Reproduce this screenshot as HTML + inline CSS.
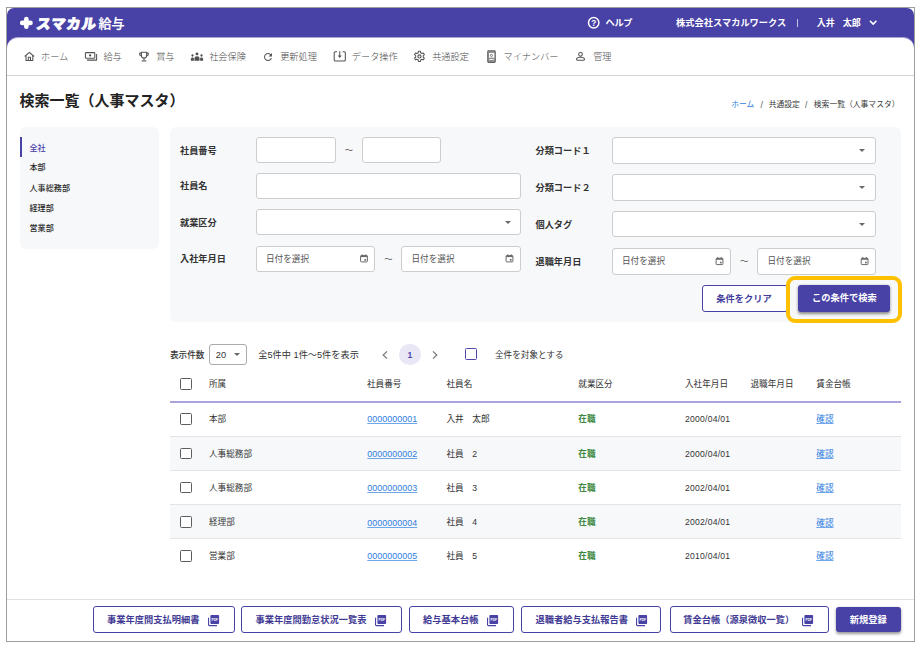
<!DOCTYPE html>
<html lang="ja">
<head>
<meta charset="utf-8">
<title>検索一覧（人事マスタ）</title>
<style>
html,body{margin:0;padding:0;}
body{width:923px;height:649px;position:relative;overflow:hidden;background:#fff;
 font-family:"Liberation Sans","Noto Sans CJK JP",sans-serif;font-size:9.2px;color:#333;}
*{box-sizing:border-box;}
.abs{position:absolute;}
.t{position:absolute;white-space:nowrap;line-height:14px;height:14px;}
.b{font-weight:700;}
#frame{position:absolute;left:6px;top:7px;width:909px;height:635px;border:1px solid #9d9d9d;border-radius:0;pointer-events:none;}
#hdr{position:absolute;left:7px;top:8px;width:907px;height:42px;background:#4841a6;border-radius:7px 7px 0 0;}
#nav{position:absolute;left:7px;top:37px;width:907px;height:39px;background:#fff;border-radius:11px 11px 0 0;border-bottom:1px solid #d4d4d4;border-top:1px solid #a9a5d6;}
.w{color:#fff;}
.nv{color:#4a4a4a;font-weight:300;}
svg{position:absolute;overflow:visible;}
.panel{position:absolute;background:#f7f8fa;border-radius:6px;}
.inp{position:absolute;background:#fff;border:1px solid #cdcdcd;border-radius:3px;}
.ph{color:#555;font-size:8.600px;}
.bc{top:98.100px;font-size:7.800px;color:#3a3a3a;}
.lbl{font-weight:700;color:#333;}
.side{font-size:8.100px;color:#2b2b2b;font-weight:500;}
.caret{position:absolute;width:0;height:0;border-left:3.300px solid transparent;border-right:3.300px solid transparent;border-top:3.800px solid #686868;}
.cb{position:absolute;width:11.800px;height:11.600px;border:1.250px solid #5c5c5c;border-radius:1.500px;background:#fff;}
.row{position:absolute;left:170px;width:731px;}
.td{font-size:8.6px;}
a.lk{color:#2f7ee0;text-decoration:underline;text-decoration-thickness:0.550px;text-underline-offset:0.800px;text-decoration-color:#6ea6ea;position:relative;top:0.400px;}
.num{font-size:8.900px;letter-spacing:0.050px;}
.dt{letter-spacing:0.230px;}
.grn{color:#3d8841;font-weight:700;}
.fb{position:absolute;top:606.200px;height:27.300px;border:1px solid #4841a6;border-radius:3px;background:#fff;}
.fbt{font-weight:700;color:#413a94;font-size:9.250px;}
</style>
</head>
<body>
<div id="hdr"></div>
<div id="nav"></div>

<!-- header -->
<svg style="left:0;top:0" width="140" height="40" viewBox="0 0 140 40"><path d="M26.350 19V26.800M22.200 22.900H30.500" stroke="#fff" stroke-width="4.600" stroke-linecap="round" fill="none"/></svg>
<span class="t w" style="left:34.700px;top:13.500px;font-size:14.300px;letter-spacing:0.950px;font-weight:900;line-height:20px;height:20px;transform:skewX(-8deg);transform-origin:0 100%;-webkit-text-stroke:0.800px #fff">スマカル</span>
<span class="t w" style="left:98.600px;top:13.500px;font-size:13px;font-weight:500;-webkit-text-stroke:0.250px #fff;line-height:20px;height:20px">給与</span>

<svg style="left:0;top:0" width="923" height="40" viewBox="0 0 923 40"><circle cx="593.700" cy="22.750" r="5.200" fill="none" stroke="#fff" stroke-width="1.500"/><text x="593.700" y="25.700" font-size="8.200" font-weight="700" fill="#fff" text-anchor="middle" font-family="Liberation Sans, sans-serif">?</text><path d="M870 20.900L873.200 24.100L876.400 20.900" stroke="#fff" stroke-width="1.500" fill="none"/></svg>
<span class="t w b" style="left:605.500px;top:15.700px;letter-spacing:-0.300px">ヘルプ</span>
<span class="t w b" style="left:676px;top:15.700px;letter-spacing:0.050px">株式会社スマカルワークス</span>
<span class="abs" style="left:797px;top:18.500px;width:1px;height:8.500px;background:#c4c1e6"></span>
<span class="t w b" style="left:816.800px;top:15.700px;font-size:9px">入井<span style="display:inline-block;width:8px"></span>太郎</span>

<!-- nav -->
<svg id="navicons" style="left:0;top:0" width="923" height="649" viewBox="0 0 923 649">
<g fill="none" stroke="#535353" stroke-width="1.050" stroke-linejoin="round">
<path d="M24.700 56.500L29.400 52.300L34.100 56.500"/><path d="M26 55.700V60.500H32.800V55.700"/><path d="M28.300 60.500V57.300H30.500V60.500"/>
<rect x="85.400" y="52.600" width="9.400" height="5.600" rx="0.800"/><path d="M87 60.100H96.600V54"/>
<path d="M141.400 52.300H146.600V55.400A2.600 2.600 0 0 1 141.400 55.400Z"/><path d="M141.400 53.100H139.700V54.100A1.900 1.900 0 0 0 141.600 56"/><path d="M146.600 53.100H148.300V54.100A1.900 1.900 0 0 1 146.400 56"/><path d="M144 58V60.600"/><path d="M141.600 60.900H146.400"/>
<path d="M337 51.800H335.200A1 1 0 0 0 334.200 52.800V60A1 1 0 0 0 335.200 61H344.300A1 1 0 0 0 345.300 60V52.800A1 1 0 0 0 344.300 51.800H342.600"/><path d="M339.750 51.300V56.500"/>
<circle cx="580.500" cy="54.300" r="1.850"/><path d="M580.500 57C578.500 57.300 576.500 58.300 576.500 59.300C576.500 59.900 576.800 60.200 577.300 60.200H583.700C584.200 60.200 584.500 59.900 584.500 59.300C584.500 58.300 582.500 57.300 580.500 57Z"/>
</g>
<g fill="#4f4f4f">
<circle cx="90.100" cy="55.400" r="1.150"/>
<circle cx="197" cy="53.900" r="1.400"/><circle cx="192.500" cy="55.500" r="1.150"/><circle cx="201.500" cy="55.500" r="1.150"/>
<path d="M194.500 60.800V58.600C194.500 57 195.600 56.200 197 56.200C198.400 56.200 199.500 57 199.500 58.600V60.800Z"/>
<path d="M190.900 60.800V59.200C190.900 58 191.600 57.400 192.500 57.400C193.200 57.400 193.700 57.600 193.900 58V60.800Z"/>
<path d="M203.100 60.800V59.200C203.100 58 202.400 57.400 201.500 57.400C200.800 57.400 200.300 57.600 200.100 58V60.800Z"/>
<path d="M337.800 55.600H341.700L339.750 57.900Z"/>
</g>
<path d="M420.64 52.74L420.45 51.25L418.45 51.25L418.26 52.74L416.87 53.54L415.49 52.96L414.49 54.69L415.68 55.60L415.68 57.20L414.49 58.11L415.49 59.84L416.87 59.26L418.26 60.06L418.45 61.55L420.45 61.55L420.64 60.06L422.03 59.26L423.41 59.84L424.41 58.11L423.22 57.20L423.22 55.60L424.41 54.69L423.41 52.96L422.03 53.54Z" fill="none" stroke="#555" stroke-width="1.050" stroke-linejoin="round"/><circle cx="419.45" cy="56.4" r="1.550" fill="none" stroke="#555" stroke-width="1.150"/>
<g>
<rect x="487.750" y="50.800" width="7.500" height="11.600" rx="0.900" fill="#949494" stroke="#636363" stroke-width="1.100"/>
<rect x="489.100" y="53" width="5.200" height="5" fill="#fff"/>
<circle cx="491.450" cy="55.400" r="1.050" fill="none" stroke="#666" stroke-width="0.850"/>
<path d="M489.100 58C490.200 57.300 492.900 57.300 494.300 58V58.400H489.100Z" fill="#8c8c8c"/>
<rect x="489.300" y="59.100" width="4.600" height="0.900" fill="#f4f4f4"/>
</g>
</svg>
<svg style="left:261.5px;top:50.6px" width="12" height="12" viewBox="0 0 24 24"><path fill="#555" d="M17.650 6.350C16.200 4.900 14.210 4 12 4c-4.420 0-7.990 3.580-7.990 8s3.570 8 7.990 8c3.730 0 6.840-2.550 7.730-6h-2.080c-.820 2.330-3.040 4-5.650 4-3.310 0-6-2.690-6-6s2.690-6 6-6c1.660 0 3.140.690 4.220 1.780L13 11h7V4l-2.350 2.350z"/></svg>
<span class="t nv" style="left:41px;top:49.8px">ホーム</span>
<span class="t nv" style="left:103.4px;top:49.8px">給与</span>
<span class="t nv" style="left:156.2px;top:49.8px">賞与</span>
<span class="t nv" style="left:209.2px;top:49.8px">社会保険</span>
<span class="t nv" style="left:280.2px;top:49.8px">更新処理</span>
<span class="t nv" style="left:351.8px;top:49.8px">データ操作</span>
<span class="t nv" style="left:432.2px;top:49.8px">共通設定</span>
<span class="t nv" style="left:503.6px;top:49.8px">マイナンバー</span>
<span class="t nv" style="left:593.2px;top:49.8px">管理</span>

<!-- title / breadcrumb -->
<span class="t b" style="left:19.5px;top:91px;font-size:15px;line-height:20px;height:20px;color:#222">検索一覧（人事マスタ）</span>
<span class="t bc" style="left:731.200px;color:#2f7fdc">ホーム</span>
<span class="t bc" style="left:759.600px;width:4px;text-align:center;font-size:8.500px;color:#555">/</span>
<span class="t bc" style="left:768.700px">共通設定</span>
<span class="t bc" style="left:804.300px;width:4px;text-align:center;font-size:8.500px;color:#555">/</span>
<span class="t bc" style="left:813.800px">検索一覧（人事マスタ）</span>

<!-- sidebar -->
<div class="panel" style="left:20px;top:126.500px;width:138.800px;height:122.300px"></div>
<div class="abs" style="left:20px;top:137.300px;width:2px;height:20px;background:#4841a6"></div>
<span class="t side" style="left:29.500px;top:141.800px;color:#4841a6">全社</span>
<span class="t side" style="left:29.500px;top:161.300px">本部</span>
<span class="t side" style="left:29.500px;top:181.700px">人事総務部</span>
<span class="t side" style="left:29.500px;top:201.700px">経理部</span>
<span class="t side" style="left:29.500px;top:222px">営業部</span>

<!-- search form -->
<div class="panel" style="left:170px;top:126.500px;width:730.600px;height:195.800px"></div>
<span class="t lbl" style="left:180px;top:143.800px">社員番号</span>
<span class="t lbl" style="left:180px;top:179.300px">社員名</span>
<span class="t lbl" style="left:180px;top:216px">就業区分</span>
<span class="t lbl" style="left:180px;top:252px">入社年月日</span>
<span class="t lbl" style="left:535.500px;top:144.0px">分類コード１</span>
<span class="t lbl" style="left:535.500px;top:181.0px">分類コード２</span>
<span class="t lbl" style="left:535.500px;top:217.8px">個人タグ</span>
<span class="t lbl" style="left:535.500px;top:254.5px">退職年月日</span>
<div class="inp" style="left:256px;top:137.4px;width:80px;height:25.4px"></div>
<div class="inp" style="left:361.600px;top:137.400px;width:79.300px;height:25.400px"></div>
<span class="t" style="left:344.800px;top:143.400px;color:#555;font-size:8.400px">～</span>
<div class="inp" style="left:256px;top:173.2px;width:264.5px;height:25.4px"></div>
<div class="inp" style="left:256px;top:209.3px;width:264.5px;height:25.4px"></div>
<div class="caret" style="left:504.700px;top:220.5px"></div>
<div class="inp" style="left:256px;top:245.600px;width:119px;height:26px"></div>
<div class="inp" style="left:401.400px;top:245.600px;width:119.400px;height:26px"></div>
<span class="t ph" style="left:266px;top:251.800px">日付を選択</span>
<span class="t" style="left:384.200px;top:251.600px;color:#555;font-size:8.400px">～</span>
<span class="t ph" style="left:411.500px;top:251.800px">日付を選択</span>
<div class="inp" style="left:612px;top:137.4px;width:264px;height:26.2px"></div>
<div class="caret" style="left:859.300px;top:149.0px"></div>
<div class="inp" style="left:612px;top:174.4px;width:264px;height:26.2px"></div>
<div class="caret" style="left:859.300px;top:186.0px"></div>
<div class="inp" style="left:612px;top:210.9px;width:264px;height:26.2px"></div>
<div class="caret" style="left:859.300px;top:222.5px"></div>
<div class="inp" style="left:612px;top:247.800px;width:119px;height:26.800px"></div>
<div class="inp" style="left:757px;top:247.800px;width:119px;height:26.800px"></div>
<span class="t ph" style="left:622px;top:253.9px">日付を選択</span>
<span class="t" style="left:739.900px;top:254.200px;color:#555;font-size:8.400px">～</span>
<span class="t ph" style="left:767.500px;top:253.9px">日付を選択</span>
<svg style="left:0;top:0" width="923" height="649" viewBox="0 0 923 649"><g transform="translate(360.1 254.3)"><rect x="0.500" y="1.300" width="6.800" height="6.300" rx="0.700" fill="none" stroke="#6a6a6a" stroke-width="1"/><rect x="0.500" y="1.300" width="6.800" height="1.500" fill="#6a6a6a"/><rect x="1.600" y="0" width="1" height="1.600" fill="#6a6a6a"/><rect x="5.200" y="0" width="1" height="1.600" fill="#6a6a6a"/><rect x="4.300" y="4.700" width="1.700" height="1.700" fill="#6a6a6a"/></g><g transform="translate(505.6 254.3)"><rect x="0.500" y="1.300" width="6.800" height="6.300" rx="0.700" fill="none" stroke="#6a6a6a" stroke-width="1"/><rect x="0.500" y="1.300" width="6.800" height="1.500" fill="#6a6a6a"/><rect x="1.600" y="0" width="1" height="1.600" fill="#6a6a6a"/><rect x="5.200" y="0" width="1" height="1.600" fill="#6a6a6a"/><rect x="4.300" y="4.700" width="1.700" height="1.700" fill="#6a6a6a"/></g><g transform="translate(715.6 257)"><rect x="0.500" y="1.300" width="6.800" height="6.300" rx="0.700" fill="none" stroke="#6a6a6a" stroke-width="1"/><rect x="0.500" y="1.300" width="6.800" height="1.500" fill="#6a6a6a"/><rect x="1.600" y="0" width="1" height="1.600" fill="#6a6a6a"/><rect x="5.200" y="0" width="1" height="1.600" fill="#6a6a6a"/><rect x="4.300" y="4.700" width="1.700" height="1.700" fill="#6a6a6a"/></g><g transform="translate(860.7 257)"><rect x="0.500" y="1.300" width="6.800" height="6.300" rx="0.700" fill="none" stroke="#6a6a6a" stroke-width="1"/><rect x="0.500" y="1.300" width="6.800" height="1.500" fill="#6a6a6a"/><rect x="1.600" y="0" width="1" height="1.600" fill="#6a6a6a"/><rect x="5.200" y="0" width="1" height="1.600" fill="#6a6a6a"/><rect x="4.300" y="4.700" width="1.700" height="1.700" fill="#6a6a6a"/></g></svg>
<!-- buttons -->
<div class="abs" style="left:702px;top:285px;width:86px;height:27.300px;border:1px solid #4841a6;border-radius:3px;background:#fff"></div>
<span class="t b" style="left:716.300px;top:291.600px;color:#453e9c;font-size:9.250px">条件をクリア</span>
<div class="abs" style="left:798px;top:285px;width:92px;height:26.800px;border-radius:3px;background:#4841a6;box-shadow:0 1.500px 3px rgba(0,0,0,.45)"></div>
<span class="t b w" style="left:812px;top:291.400px;font-size:9.250px">この条件で検索</span>
<div class="abs" style="left:786px;top:276px;width:116px;height:47px;border:4px solid #ffc000;border-radius:9px"></div>

<!-- list controls -->
<span class="t" style="left:170px;top:347.700px;font-size:8.600px;font-weight:500">表示件数</span>
<div class="inp" style="left:209px;top:344.400px;width:37.600px;height:20.600px;border-color:#ababab"></div>
<span class="t" style="left:215.800px;top:347.900px;font-size:9.200px">20</span>
<div class="caret" style="left:234px;top:353.200px;border-left-width:3px;border-right-width:3px;border-top-width:3.400px"></div>
<span class="t" style="left:258.3px;top:347.5px;font-size:9.2px">全5件中 1件～5件を表示</span>
<svg style="left:382px;top:350.5px" width="6" height="8" viewBox="0 0 6 8"><path d="M5 0.400L1.200 4L5 7.600" stroke="#7c7c7c" stroke-width="1.300" fill="none"/></svg>
<div class="abs" style="left:399.3px;top:344px;width:21.4px;height:21.4px;border-radius:50%;background:#e9e6f5"></div>
<span class="t" style="left:400px;width:20px;text-align:center;top:348.300px;font-size:8.600px;font-weight:700;color:#4f48ad">1</span>
<svg style="left:432.2px;top:350.5px" width="6" height="8" viewBox="0 0 6 8"><path d="M1 0.400L4.800 4L1 7.600" stroke="#7c7c7c" stroke-width="1.300" fill="none"/></svg>
<div class="cb" style="left:465.300px;top:348.200px;width:12.200px;height:12.200px;border-color:#4f48ad;border-width:1.800px"></div>
<span class="t" style="left:495px;top:347.5px;font-size:8.6px">全件を対象とする</span>
<!-- table -->
<div class="cb" style="left:180px;top:378.3px"></div>
<span class="t td" style="left:209px;top:377.2px">所属</span>
<span class="t td" style="left:367px;top:377.2px">社員番号</span>
<span class="t td" style="left:446.5px;top:377.2px">社員名</span>
<span class="t td" style="left:578.3px;top:377.2px">就業区分</span>
<span class="t td" style="left:685px;top:377.2px">入社年月日</span>
<span class="t td" style="left:750.5px;top:377.2px">退職年月日</span>
<span class="t td" style="left:816.3px;top:377.2px">賃金台帳</span>
<div class="abs" style="left:170px;top:401px;width:731px;height:2px;background:#a9a4da"></div>
<div class="row" style="top:403px;height:33.5px;border-bottom:1px solid #e4e4e7;"></div>
<div class="cb" style="left:180px;top:413.1px"></div>
<span class="t td" style="left:209px;top:412.0px">本部</span>
<span class="t td num" style="left:367.300px;top:412.0px"><a class="lk">0000000001</a></span>
<span class="t td" style="left:446.500px;top:412.0px">入井　太郎</span>
<span class="t td grn" style="left:578.300px;top:412.0px">在職</span>
<span class="t td dt" style="left:685px;top:412.0px">2000/04/01</span>
<span class="t td" style="left:816.300px;top:412.0px"><a class="lk">確認</a></span>
<div class="row" style="top:436.5px;height:34.2px;background:#f7f8fa;border-bottom:1px solid #e4e4e7;"></div>
<div class="cb" style="left:180px;top:447.6px"></div>
<span class="t td" style="left:209px;top:446.5px">人事総務部</span>
<span class="t td num" style="left:367.300px;top:446.5px"><a class="lk">0000000002</a></span>
<span class="t td" style="left:446.500px;top:446.5px">社員　2</span>
<span class="t td grn" style="left:578.300px;top:446.5px">在職</span>
<span class="t td dt" style="left:685px;top:446.5px">2000/04/01</span>
<span class="t td" style="left:816.300px;top:446.5px"><a class="lk">確認</a></span>
<div class="row" style="top:470.7px;height:34.0px;border-bottom:1px solid #e4e4e7;"></div>
<div class="cb" style="left:180px;top:481.9px"></div>
<span class="t td" style="left:209px;top:480.8px">人事総務部</span>
<span class="t td num" style="left:367.300px;top:480.8px"><a class="lk">0000000003</a></span>
<span class="t td" style="left:446.500px;top:480.8px">社員　3</span>
<span class="t td grn" style="left:578.300px;top:480.8px">在職</span>
<span class="t td dt" style="left:685px;top:480.8px">2002/04/01</span>
<span class="t td" style="left:816.300px;top:480.8px"><a class="lk">確認</a></span>
<div class="row" style="top:504.7px;height:34.2px;background:#f7f8fa;border-bottom:1px solid #e4e4e7;"></div>
<div class="cb" style="left:180px;top:516.3px"></div>
<span class="t td" style="left:209px;top:515.2px">経理部</span>
<span class="t td num" style="left:367.300px;top:515.2px"><a class="lk">0000000004</a></span>
<span class="t td" style="left:446.500px;top:515.2px">社員　4</span>
<span class="t td grn" style="left:578.300px;top:515.2px">在職</span>
<span class="t td dt" style="left:685px;top:515.2px">2002/04/01</span>
<span class="t td" style="left:816.300px;top:515.2px"><a class="lk">確認</a></span>
<div class="row" style="top:538.9px;height:34.1px;"></div>
<div class="cb" style="left:180px;top:550.1px"></div>
<span class="t td" style="left:209px;top:549.0px">営業部</span>
<span class="t td num" style="left:367.300px;top:549.0px"><a class="lk">0000000005</a></span>
<span class="t td" style="left:446.500px;top:549.0px">社員　5</span>
<span class="t td grn" style="left:578.300px;top:549.0px">在職</span>
<span class="t td dt" style="left:685px;top:549.0px">2010/04/01</span>
<span class="t td" style="left:816.300px;top:549.0px"><a class="lk">確認</a></span>
<!-- footer -->
<div class="abs" style="left:7px;top:599px;width:907px;height:1px;background:#e0e0e0"></div>
<div class="fb" style="left:93px;width:141.7px"></div>
<span class="t fbt" style="left:107.1px;top:612.900px">事業年度間支払明細書</span>
<svg style="left:207.7px;top:615px" width="12" height="12" viewBox="0 0 12 12"><path d="M0.550 2.700V9.700a0.900 0.900 0 0 0 .9 .9H9" fill="none" stroke="#4841a6" stroke-width="1.100"/><rect x="2.400" y="0" width="8.700" height="8.900" rx="1" fill="#4841a6"/><text x="6.750" y="5.900" font-size="3.800" font-weight="700" fill="#fff" text-anchor="middle" font-family="Liberation Sans, sans-serif" textLength="6.600" lengthAdjust="spacingAndGlyphs">PDF</text></svg>
<div class="fb" style="left:241.4px;width:160.4px"></div>
<span class="t fbt" style="left:255.5px;top:612.900px">事業年度間勤怠状況一覧表</span>
<svg style="left:375px;top:615px" width="12" height="12" viewBox="0 0 12 12"><path d="M0.550 2.700V9.700a0.900 0.900 0 0 0 .9 .9H9" fill="none" stroke="#4841a6" stroke-width="1.100"/><rect x="2.400" y="0" width="8.700" height="8.900" rx="1" fill="#4841a6"/><text x="6.750" y="5.900" font-size="3.800" font-weight="700" fill="#fff" text-anchor="middle" font-family="Liberation Sans, sans-serif" textLength="6.600" lengthAdjust="spacingAndGlyphs">PDF</text></svg>
<div class="fb" style="left:409px;width:104.7px"></div>
<span class="t fbt" style="left:423.1px;top:612.900px">給与基本台帳</span>
<svg style="left:486.9px;top:615px" width="12" height="12" viewBox="0 0 12 12"><path d="M0.550 2.700V9.700a0.900 0.900 0 0 0 .9 .9H9" fill="none" stroke="#4841a6" stroke-width="1.100"/><rect x="2.400" y="0" width="8.700" height="8.900" rx="1" fill="#4841a6"/><text x="6.750" y="5.900" font-size="3.800" font-weight="700" fill="#fff" text-anchor="middle" font-family="Liberation Sans, sans-serif" textLength="6.600" lengthAdjust="spacingAndGlyphs">PDF</text></svg>
<div class="fb" style="left:520.5px;width:140.8px"></div>
<span class="t fbt" style="left:535.4px;top:612.900px">退職者給与支払報告書</span>
<svg style="left:635.6px;top:615px" width="12" height="12" viewBox="0 0 12 12"><path d="M0.550 2.700V9.700a0.900 0.900 0 0 0 .9 .9H9" fill="none" stroke="#4841a6" stroke-width="1.100"/><rect x="2.400" y="0" width="8.700" height="8.900" rx="1" fill="#4841a6"/><text x="6.750" y="5.900" font-size="3.800" font-weight="700" fill="#fff" text-anchor="middle" font-family="Liberation Sans, sans-serif" textLength="6.600" lengthAdjust="spacingAndGlyphs">PDF</text></svg>
<div class="fb" style="left:669.5px;width:159.5px"></div>
<span class="t fbt" style="left:683.2px;top:612.900px">賃金台帳（源泉徴収一覧）</span>
<svg style="left:802.4px;top:615px" width="12" height="12" viewBox="0 0 12 12"><path d="M0.550 2.700V9.700a0.900 0.900 0 0 0 .9 .9H9" fill="none" stroke="#4841a6" stroke-width="1.100"/><rect x="2.400" y="0" width="8.700" height="8.900" rx="1" fill="#4841a6"/><text x="6.750" y="5.900" font-size="3.800" font-weight="700" fill="#fff" text-anchor="middle" font-family="Liberation Sans, sans-serif" textLength="6.600" lengthAdjust="spacingAndGlyphs">PDF</text></svg>
<div class="abs" style="left:835.600px;top:607px;width:65.300px;height:25px;border-radius:3px;background:#4841a6;box-shadow:0 1.500px 3px rgba(0,0,0,.4)"></div>
<span class="t b w" style="left:849.800px;top:612.500px;font-size:9.250px">新規登録</span>

<div id="frame"></div>
</body>
</html>
